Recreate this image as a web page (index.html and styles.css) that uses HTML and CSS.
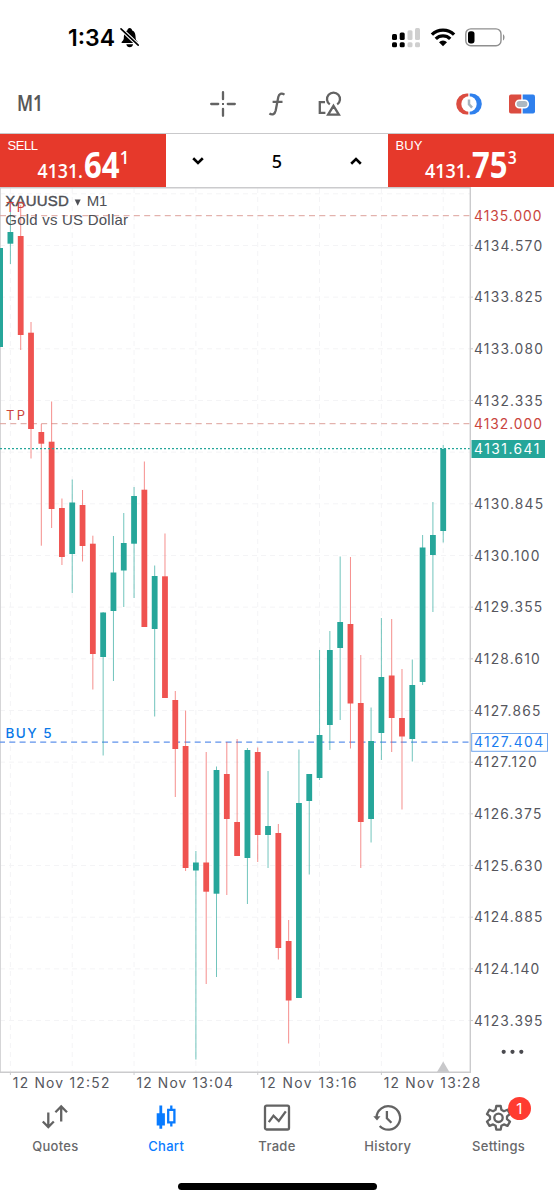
FILE: index.html
```html
<!DOCTYPE html>
<html lang="en">
<head>
<meta charset="utf-8">
<title>XAUUSD M1</title>
<link rel="stylesheet" href="styles.css">
</head>
<body>
<div class="screen">
  <header class="status">
    <div class="status-left">
      <svg width="50" height="32"><text class="clock" x="0" y="20" textLength="47" lengthAdjust="spacingAndGlyphs">1:34</text></svg>
      <svg class="bell" width="20" height="21" viewBox="0 0 20 21">
        <path d="M1.500 16c0-1.700 2-2.200 2.300-4.400.2-3.300.2-6.800 3.500-8.100C7.500 1.900 8.400 1 9.700 1s2.200.9 2.500 2.500c3.300 1.300 3.300 4.800 3.500 8.100.2 2.200 2.200 2.700 2.200 4.400z"/>
        <path d="M6.300 17.300h6.800c-.4 1.900-1.600 2.900-3.400 2.900S6.700 19.200 6.300 17.300z"/>
        <path class="bell-gap" d="M.5 1.400l18.200 17.200"/>
        <path class="bell-slash" d="M1 1.800l17.200 16.400"/>
      </svg>
    </div>
    <div class="status-right">
      <svg width="29" height="20" viewBox="0 0 29 20">
        <rect x="0" y="6" width="5" height="6" rx="1.500"/><rect x="7.700" y="4.500" width="5" height="7.500" rx="1.500"/>
        <rect x="0" y="14.300" width="5" height="5" rx="1.500"/><rect x="7.700" y="14.300" width="5" height="5" rx="1.500"/>
        <g class="dim"><rect x="15.500" y="2.300" width="5" height="9.700" rx="1.500"/><rect x="23" y="0" width="5" height="12" rx="1.500"/><rect x="15.500" y="14.300" width="5" height="5" rx="1.500"/><rect x="23" y="14.300" width="5" height="5" rx="1.500"/></g>
      </svg>
      <svg class="wifi" width="26" height="19" viewBox="0 0 26 19">
        <path d="M1.900 6.700a15.700 15.700 0 0 1 22.200 0" class="arc"/><path d="M5.800 10.800a10.200 10.200 0 0 1 14.400 0" class="arc"/>
        <path d="M13 18.200l-4-4a5.700 5.700 0 0 1 8 0z"/>
      </svg>
      <svg class="battery" width="41" height="19" viewBox="0 0 41 19"><rect class="cell" x=".8" y=".9" width="35.200" height="16.900" rx="5"/><rect x="3" y="3.200" width="6.500" height="12.200" rx="2.600"/><path class="cap" d="M38 6.300c2 .7 2 5.400 0 6.100z"/></svg>
    </div>
  </header>

  <nav class="toolbar">
    <svg class="tf" width="30" height="32"><text class="frame" x="0" y="23" textLength="26" lengthAdjust="spacingAndGlyphs">M1</text></svg>
    <svg class="cross" width="28" height="28" viewBox="0 0 28 28"><path class="line" d="M14 2.200v7M14 18.800v7M2.200 14h7M18.800 14h7"/><rect class="fill" x="13" y="13" width="2" height="2"/></svg>
    <svg class="func" width="20" height="26" viewBox="0 0 20 26"><path class="line" d="M16.500 3.600C13.500 1.700 11 2.600 10.300 6L7.700 19.500C6.900 23.200 4.400 24.500 1.400 22.500M4.600 10.800h9.900"/></svg>
    <svg class="shapes" width="26" height="26" viewBox="0 0 26 26"><path class="line" d="M8 11.200H2.800v10.600h5.600M12.800 13.400a6.500 6.500 0 1 1 7.400 0M16.500 14.800l5.400 8.900H11.100z"/></svg>
    <svg class="timer" width="28" height="24" viewBox="0 0 28 24"><path class="red" d="M13.300 1.500H11.700a10.500 10.500 0 0 0 0 21h1.600z"/><path class="blue" d="M14.700 1.500h1.600a10.500 10.500 0 0 1 0 21h-1.600z"/><circle class="dial" cx="14" cy="12" r="7.700"/><path class="hand" d="M14 7.500v4.800l3.100 3.400"/></svg>
    <svg class="link" width="28" height="20" viewBox="0 0 28 20"><path class="red" d="M3 .5h10.300v19H3a2 2 0 0 1-2-2v-15a2 2 0 0 1 2-2z"/><path class="blue" d="M14.700 .5H25a2 2 0 0 1 2 2v15a2 2 0 0 1-2 2H14.700z"/><rect class="chain" x="7.800" y="6.200" width="12.400" height="7.600" rx="3.500"/></svg>
  </nav>

  <section class="trade">
    <svg class="price" width="166" height="53"><text class="side" x="7.500" y="16.300" textLength="30.500">SELL</text><text class="digits" x="37.500" y="44.300" font-size="20.500" textLength="45.500" lengthAdjust="spacingAndGlyphs">4131.</text><text class="digits big" x="84" y="44" font-size="35" textLength="35.500" lengthAdjust="spacingAndGlyphs">64</text><text class="digits" x="119.800" y="29.500" font-size="18" textLength="9.500" lengthAdjust="spacingAndGlyphs">1</text></svg>
    <div class="volume">
      <svg width="12" height="10" viewBox="0 0 12 10"><path d="M1.200 2.300L6 7l4.800-4.700"/></svg>
      <span class="lots">5</span>
      <svg width="12" height="10" viewBox="0 0 12 10"><path d="M1.200 7.700L6 3l4.800 4.700"/></svg>
    </div>
    <svg class="price" width="166" height="53"><text class="side" x="7.500" y="16.300" textLength="27">BUY</text><text class="digits" x="37" y="44.300" font-size="20.500" textLength="46" lengthAdjust="spacingAndGlyphs">4131.</text><text class="digits big" x="84" y="44" font-size="35" textLength="35.500" lengthAdjust="spacingAndGlyphs">75</text><text class="digits" x="119.800" y="29.500" font-size="18" textLength="9" lengthAdjust="spacingAndGlyphs">3</text></svg>
  </section>

  <main class="chart">
    <svg id="plot" width="554" height="907" viewBox="0 187 554 907">
      <g id="grid"></g>
      <path class="frame-line" d="M.5 188V1072"/>
      <path class="tp-line" d="M0 215.700H470M0 423.700H470"/>
      <path class="open-line" d="M0 742.200H470"/>
      <g id="candles"></g>
      <path class="bid-line" d="M0 448.600H470"/>
      <path class="arrow" d="M437 1072l6.200-10.500 6.200 10.500z"/>
      <path class="axis" d="M0 1072.200H471M470.300 187V1073"/>
      <path class="top-line" d="M0 187.700H470"/>
      <text class="order" x="5.500" y="738" textLength="46">BUY 5</text>
      <text class="symbol heavy" x="5.300" y="206.300" textLength="63.500">XAUUSD</text>
      <path class="caret" d="M74.700 199.500h6l-3 6.300z"/>
      <text class="symbol" x="86.800" y="206.300" textLength="20.500">M1</text>
      <text class="symbol" x="5.300" y="225.300" textLength="122.700">Gold vs US Dollar</text>
      <g class="tp"><text x="6" y="211.500" textLength="19">TP</text><text x="6" y="419.500" textLength="19">TP</text></g>
      <g id="labels"></g>
      <g class="more"><circle cx="503.700" cy="1051.800" r="2.100"/><circle cx="512.500" cy="1051.800" r="2.100"/><circle cx="521.300" cy="1051.800" r="2.100"/></g>
    </svg>
  </main>

  <nav class="tabs">
    <a class="tab"><svg width="30" height="30" viewBox="0 0 30 30"><path class="line" d="M8.300 8.500v14.300M2.800 17.500l5.500 5.500 5.500-5.500M21.200 17.500V3M15.400 8.300l5.800-5.800L27 8.300"/></svg><span>Quotes</span></a>
    <a class="tab active"><svg width="30" height="30" viewBox="0 0 30 30"><path class="fill" d="M8.400 1.500h2.800v7.700h2.700v12.300h-2.700v3.300H8.400v-3.300H5.700V9.200h2.700z"/><path class="line" d="M20.300 1.500v4M20.300 18.500v4M17.200 5.800h6.200v12.500h-6.200z"/></svg><span>Chart</span></a>
    <a class="tab"><svg width="30" height="30" viewBox="0 0 30 30"><rect class="line" x="3" y="1.700" width="24" height="23.800" rx="1.500"/><path class="line" d="M6.800 18.200l4.700-6.500 5.300 5.300 7-9.700"/></svg><span>Trade</span></a>
    <a class="tab"><svg width="30" height="30" viewBox="0 0 30 30"><path class="line" d="M3.500 13.500A11.800 11.800 0 1 1 6.700 22M13.900 7v7.300l4.500 4.500"/><path class="fill" d="M.3 12.300h7.200L4 16.500z"/></svg><span>History</span></a>
    <a class="tab"><svg width="30" height="30" viewBox="0 0 30 30"><path class="line gear" d="M12.300 2h4.400l.7 3.800 2.500 1.400 3.600-1.500 2.500 4.300-3 2.400v2.800l3 2.400-2.500 4.300-3.600-1.500-2.500 1.400-.7 3.800h-4.400l-.7-3.800-2.500-1.400-3.600 1.500L3 17.600l3-2.400v-2.800L3 10l2.500-4.300 3.600 1.500 2.500-1.400z"/><circle class="line gear" cx="14.500" cy="13.800" r="4.200"/></svg><span>Settings</span><b class="badge">1</b></a>
  </nav>
  <footer class="home"><i class="pill"></i></footer>
</div>
<script src="chart.js"></script>
</body>
</html>
```

FILE: styles.css
```css
* { box-sizing: border-box; }
body { margin: 0; background: #fff; font-family: Inter, "Liberation Sans", sans-serif; }
svg { display: block; flex: none; overflow: visible; }
.screen { width: 554px; height: 1200px; display: flex; flex-direction: column; overflow: hidden; background: #fff; }

.status { height: 75px; display: flex; justify-content: space-between; padding: 26px 48px 0 68px; }
.status-left { display: flex; gap: 2px; }
.clock { font-size: 22.500px; font-weight: 600; }
.bell { margin-top: 1px; }
.bell-gap { stroke: #fff; stroke-width: 3.800; }
.bell-slash { stroke: #000; stroke-width: 1.600; stroke-linecap: round; }
.status-right { display: flex; gap: 9px; padding-top: 1.500px; }
.dim { fill: #cfcfcf; }
.arc { fill: none; stroke: #000; stroke-width: 3.300; }
.cell { fill: none; stroke: #8f8f8f; stroke-width: 1.400; }
.cap { fill: #8f8f8f; }

.toolbar { height: 58px; display: flex; align-items: center; padding-left: 17px; }
.toolbar .cross { margin-left: 162px; }
.toolbar .func { margin-left: 31px; }
.toolbar .shapes { margin-left: 29px; }
.toolbar .timer { margin-left: 112px; }
.toolbar .link { margin-left: 25px; }
.frame { font: 600 21px "Noto Sans", sans-serif; fill: #585858; }
.line { fill: none; stroke: #636363; stroke-width: 2.300; }
.cross .line { stroke-linecap: round; }
.fill { fill: #636363; }
.dial { fill: #fff; }
.hand { fill: none; stroke: #a6b3bd; stroke-width: 2.500; }
.red { fill: #db4c40; }
.blue { fill: #2f80ed; }
.chain { fill: #acb8c2; stroke: #fff; stroke-width: 1.600; }

.trade { height: 54px; display: flex; border-top: 1px solid #c9c9cb; }
.price { background: #e6392b; fill: #fff; }
.side { font: 13px "Liberation Sans", sans-serif; }
.digits { font-family: "Open Sans", "Noto Sans", sans-serif; font-weight: 600; }
.digits.big { font-weight: 700; }
.volume { flex: 1; display: flex; align-items: center; justify-content: space-between; padding: 0 26px; }
.volume path { fill: none; stroke: #000; stroke-width: 2.600; }
.lots { font: 500 18px "Noto Sans", sans-serif; }

.chart { height: 907px; }
.grid-line { stroke: #f4f4f6; stroke-width: 1; stroke-dasharray: 5 4; }
.frame-line { stroke: #d5d5d7; }
.axis { stroke: #cbcbcd; stroke-width: 1.400; fill: none; }
.top-line { stroke: #cbcbcd; stroke-width: 1.400; }
.tick { stroke: #cbcbcd; }
.tp-line { stroke: #dda09a; stroke-dasharray: 6 4.300; }
.open-line { stroke: #5f92ec; stroke-width: 1.200; stroke-dasharray: 6 4.300; stroke-dashoffset: 1; }
.bid-line { stroke: #26a69a; stroke-width: 1.300; stroke-dasharray: 2 2; }
.up { fill: #26a69a; }
.down { fill: #ef5350; }
.wick { opacity: .65; }
.arrow { fill: #c8c8ca; }
.tp { fill: #cc453d; font-size: 13px; }
.order { fill: #0a78e8; font-size: 13.500px; font-weight: 500; }
.symbol { font: 15px "Liberation Sans", sans-serif; fill: #4e4f55; }
.heavy { stroke: #4e4f55; stroke-width: .4; }
.caret { fill: #4e4f55; }
.label { font-size: 13.800px; fill: #55565d; }
.label.target { fill: #c9443d; }
.label.entry { fill: #1a7cf0; }
.label.current { fill: #fff; }
.current-box { fill: #26a69a; }
.entry-box { fill: #fff; stroke: #6fa5ee; }
.more { fill: #4a4a4f; }

.tabs { height: 77px; display: grid; grid-template-columns: repeat(5, 1fr); padding-top: 9.500px; }
.tab { position: relative; display: flex; flex-direction: column; align-items: center; gap: 4px; font-size: 13px; font-weight: 500; line-height: 16px; letter-spacing: .3px; color: #68686a; }
.active { color: #087bff; }
.active .line { stroke: #087bff; }
.active .fill { fill: #087bff; }
.gear { stroke-width: 2.300; stroke-linejoin: round; }
.badge { position: absolute; left: 64.500px; top: -7px; width: 23px; height: 23px; border-radius: 50%; background: #ff3b30; color: #fff; font-weight: 400; font-size: 15px; line-height: 23px; text-align: center; letter-spacing: 0; }
.home { flex: 1; display: flex; justify-content: center; padding-top: 12px; }
.pill { width: 199px; height: 6.500px; border-radius: 4px; background: #000; }
```

FILE: chart.js
```javascript
const NS = "http://www.w3.org/2000/svg";
const el = (parent, name, attrs, text) => {
  const node = document.createElementNS(NS, name);
  for (const key in attrs) node.setAttribute(key, attrs[key]);
  if (text) node.textContent = text;
  document.getElementById(parent).appendChild(node);
};

const START = 10.4;
const STEP = 10.305;

// direction, high, body top, body bottom, low
const candles = [
  ["up", 248, 248, 347, 347],
  ["up", 212, 232, 243.7, 264],
  ["down", 205, 236, 335, 350],
  ["down", 322, 332.7, 429, 458.5],
  ["down", 424, 432, 443.7, 545.7],
  ["down", 401.5, 441.7, 509, 528],
  ["down", 498.5, 508, 557, 565],
  ["up", 479.5, 502.5, 554, 593],
  ["down", 490, 505, 546, 561.5],
  ["down", 535.7, 543.7, 654, 689.5],
  ["up", 612, 612.5, 657, 755.5],
  ["up", 536, 572.5, 611, 681],
  ["up", 513, 543, 570.5, 607],
  ["up", 487, 496, 543.7, 598],
  ["down", 461.5, 489.7, 627, 627],
  ["up", 565.5, 576, 629, 716.5],
  ["down", 533.5, 576.3, 698, 698],
  ["down", 691, 700, 749, 797],
  ["down", 710.5, 746, 868, 871],
  ["up", 851, 862.5, 870.5, 1059.5],
  ["down", 752, 862.5, 891.7, 984],
  ["up", 766.5, 770, 893.7, 977],
  ["down", 742, 774, 819, 895],
  ["down", 739, 822, 856, 856],
  ["up", 748, 750, 858, 904],
  ["down", 747.5, 752, 835, 862],
  ["up", 771, 826, 835, 868],
  ["down", 824, 833, 948, 959.5],
  ["down", 920, 941, 1000.5, 1043.5],
  ["up", 749.5, 803, 998, 998],
  ["up", 774, 774, 801, 874.5],
  ["up", 650, 735, 778, 780],
  ["up", 631, 650, 725, 750],
  ["up", 556.5, 622, 648, 720],
  ["down", 557, 624, 703.5, 748.5],
  ["down", 655, 703, 822, 868],
  ["up", 707.5, 741, 819, 842.5],
  ["up", 618, 677, 733, 760],
  ["down", 619, 675.5, 718, 752],
  ["down", 669, 718, 736.5, 809.5],
  ["up", 659.5, 685, 739, 761.5],
  ["up", 535, 547.5, 682, 685],
  ["up", 502, 535, 555, 612],
  ["up", 445, 449, 531, 542.5]
];

candles.forEach(([dir, high, top, bottom, low], i) => {
  const x = START + STEP * (i - 1);
  el("candles", "rect", { class: dir + " wick", x: x - 0.5, y: high, width: 1, height: low - high });
  el("candles", "rect", { class: dir, x: x - 2.9, y: top, width: 5.8, height: bottom - top });
});

for (let i = 0; i < 8; i++) {
  const x = START + STEP * 6 * i;
  el("grid", "path", { class: "grid-line", d: `M${x} 188V1072` });
}

const prices = [null, "4134.570", "4133.825", "4133.080", "4132.335", null, "4130.845", "4130.100",
  "4129.355", "4128.610", "4127.865", "4127.120", "4126.375", "4125.630", "4124.885", "4124.140", "4123.395"];
prices.forEach((price, i) => {
  const y = 193.8 + 51.67 * i;
  el("grid", "path", { class: "grid-line", d: `M0 ${y}H470` });
  if (!price) return;
  el("labels", "path", { class: "tick", d: `M471 ${y}H473` });
  el("labels", "text", { class: "label", x: 474, y: y + 5.1, "letter-spacing": 1.2 }, price);
});

el("labels", "rect", { class: "current-box", x: 471.5, y: 440, width: 73.5, height: 18 });
el("labels", "rect", { class: "entry-box", x: 471.7, y: 733.5, width: 75.8, height: 17.8 });
[["4135.000", 215.7, 1], ["4132.000", 423.7, 1], ["4131.641", 448.8, 1.5], ["4127.404", 742.4, 1.4]]
  .forEach(([price, y, spacing], i) => {
    const kind = ["target", "target", "current", "entry"][i];
    el("labels", "text", { class: "label " + kind, x: 474, y: y + 5, "letter-spacing": spacing }, price);
  });

["12:52", "13:04", "13:16", "13:28"].forEach((time, i) => {
  const x = START + STEP * 12 * i;
  el("labels", "path", { class: "tick", d: `M${x} 1072V1075` });
  el("labels", "text", { class: "label", x: x + 2.4, y: 1087.6, textLength: 96.5 }, "12 Nov " + time);
});
```
